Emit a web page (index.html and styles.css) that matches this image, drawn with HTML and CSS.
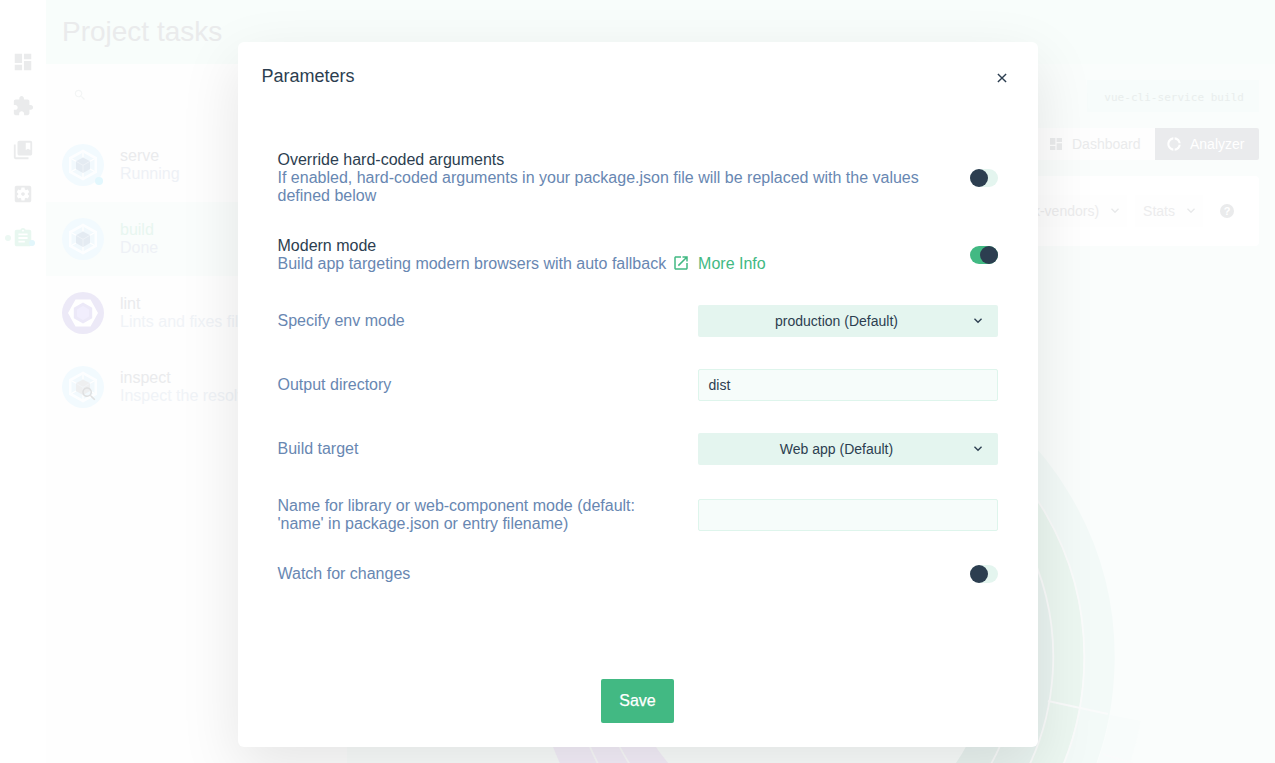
FILE: index.html
```html
<!DOCTYPE html>
<html lang="en">
<head>
<meta charset="utf-8">
<title>Project tasks</title>
<link rel="stylesheet" href="styles.css">
</head>
<body>
<svg class="defs" width="0" height="0">
  <symbol id="dashboard" viewBox="0 0 24 24"><path d="M3 13h8V3H3v10zm0 8h8v-6H3v6zm10 0h8V11h-8v10zm0-18v6h8V3h-8z"/></symbol>
  <symbol id="chevron" viewBox="0 0 24 24"><path d="M7.41 7.84L12 12.42l4.59-4.58L18 9.25l-6 6-6-6z"/></symbol>
  <symbol id="search" viewBox="0 0 24 24"><path d="M15.5 14h-.79l-.28-.27C15.41 12.59 16 11.11 16 9.5 16 5.91 13.09 3 9.5 3S3 5.91 3 9.5 5.91 16 9.5 16c1.61 0 3.09-.59 4.23-1.57l.27.28v.79l5 4.99L20.49 19l-4.99-5zm-6 0C7.01 14 5 11.99 5 9.5S7.01 5 9.5 5 14 7.01 14 9.5 11.99 14 9.5 14z"/></symbol>
  <symbol id="webpack" viewBox="0 0 42 42">
    <circle cx="21" cy="21" r="21" fill="#f2fafe"/>
    <path d="M21 5.500l14 7.800v15.400l-14 7.800-14-7.800V13.300z" fill="#fdfeff"/>
    <path d="M21 8.500l11.500 6.400v12.200L21 33.500l-11.500-6.400V14.900z" fill="#f2f9fd"/>
    <path d="M21 13.500v-5M14 17.300l-4.500-2.500M28 17.300l4.500-2.500M14 25l-4.500 2.500M28 25l4.500 2.500M21 29v5" stroke="#fff" stroke-width="1.300"/>
    <path class="cube" d="M21 13.500l7 3.800v7.700l-7 4-7-4v-7.700z"/>
    <path d="M14 17.300l7 4 7-4M21 21.300V29" fill="none" stroke="#f4f7fb" stroke-width=".7"/>
  </symbol>
</svg>
<div class="app">
  <nav class="sidebar">
    <svg class="nav-icon"><use href="#dashboard"/></svg>
    <svg class="nav-icon" viewBox="0 0 24 24"><path d="M20.500 11H19V7c0-1.100-.9-2-2-2h-4V3.500C13 2.120 11.880 1 10.500 1S8 2.120 8 3.500V5H4c-1.100 0-1.990.9-1.990 2v3.800H3.500c1.490 0 2.700 1.210 2.700 2.700s-1.210 2.700-2.700 2.700H2V20c0 1.100.9 2 2 2h3.800v-1.500c0-1.490 1.210-2.700 2.700-2.700s2.700 1.210 2.700 2.700V22H17c1.100 0 2-.9 2-2v-4h1.500c1.380 0 2.500-1.120 2.500-2.500S21.880 11 20.500 11z"/></svg>
    <svg class="nav-icon" viewBox="0 0 24 24"><path d="M4 6H2v14c0 1.100.9 2 2 2h14v-2H4V6z"/><path d="M20 2H8c-1.100 0-2 .9-2 2v12c0 1.100.9 2 2 2h12c1.100 0 2-.9 2-2V4c0-1.100-.9-2-2-2zm0 10l-2.500-1.500L15 12V4h5v8z"/></svg>
    <svg class="nav-icon" viewBox="0 0 24 24"><path d="M12 10c-1.100 0-2 .9-2 2s.9 2 2 2 2-.9 2-2-.9-2-2-2zm7-7H5c-1.110 0-2 .9-2 2v14c0 1.100.890 2 2 2h14c1.110 0 2-.9 2-2V5c0-1.100-.890-2-2-2zm-1.750 9c0 .230-.020.460-.050.680l1.480 1.160c.130.110.170.300.080.450l-1.400 2.420c-.090.150-.270.210-.430.150l-1.740-.7c-.360.280-.760.510-1.180.690l-.260 1.850c-.030.170-.180.300-.350.300h-2.800c-.170 0-.320-.130-.350-.290l-.260-1.850c-.430-.180-.820-.410-1.180-.690l-1.740.7c-.160.060-.340 0-.430-.150l-1.400-2.420c-.090-.150-.050-.340.080-.450l1.480-1.160c-.030-.230-.050-.460-.050-.690s.020-.460.050-.680l-1.480-1.160c-.130-.110-.170-.300-.080-.450l1.400-2.420c.090-.150.270-.210.430-.150l1.740.7c.360-.280.760-.510 1.180-.690l.260-1.850c.030-.170.180-.300.350-.300h2.800c.170 0 .320.130.350.290l.260 1.850c.430.180.820.410 1.180.690l1.740-.7c.160-.060.340 0 .430.150l1.400 2.420c.090.150.050.340-.080.450l-1.480 1.160c.030.230.050.460.050.690z"/></svg>
    <div class="nav-active">
      <svg class="nav-icon" viewBox="0 0 24 24"><path d="M19 3h-4.180C14.400 1.840 13.300 1 12 1s-2.400.84-2.820 2H5c-1.100 0-2 .9-2 2v14c0 1.100.9 2 2 2h14c1.100 0 2-.9 2-2V5c0-1.100-.9-2-2-2zm-7 0c.55 0 1 .45 1 1s-.45 1-1 1-1-.45-1-1 .45-1 1-1zm2 14H7v-2h7v2zm3-4H7v-2h10v2zm0-4H7V7h10v2z"/></svg>
    </div>
  </nav>
  <div class="page">
    <header class="top">Project tasks</header>
    <div class="body">
      <aside class="tasks">
        <svg class="search"><use href="#search"/></svg>
        <div class="task running"><svg class="logo"><use href="#webpack"/></svg><div><div class="name">serve</div><div class="status">Running</div></div></div>
        <div class="task selected"><svg class="logo"><use href="#webpack"/></svg><div><div class="name">build</div><div class="status">Done</div></div></div>
        <div class="task"><svg class="logo" viewBox="0 0 42 42"><circle cx="21" cy="21" r="21" fill="#ece9f7"/><path d="M13.500 7.500h15L36 21l-7.500 13.500h-15L6 21z" fill="#fff"/><path d="M21 10.500l9.200 5.200v10.600L21 31.500l-9.200-5.200V15.700z" fill="#ece9f8"/><path d="M21 14l6 3.500v7L21 28l-6-3.500v-7z" fill="#f1eefd"/></svg><div><div class="name">lint</div><div class="status faint">Lints and fixes files</div></div></div>
        <div class="task inspect"><svg class="logo"><use href="#webpack"/></svg><svg class="lens"><use href="#search"/></svg><div><div class="name">inspect</div><div class="status faint">Inspect the resolved</div></div></div>
      </aside>
      <main class="details">
        <div class="command">vue-cli-service build</div>
        <div class="tabs">
          <div class="tab"><svg class="icon"><use href="#dashboard"/></svg>Dashboard</div>
          <div class="tab current"><svg class="icon donut" viewBox="0 0 24 24"><path d="M11 5.080V2c-5 .5-9 4.810-9 10s4 9.500 9 10v-3.080c-3-.480-6-3.400-6-6.920s3-6.440 6-6.920zM18.970 11H22c-.470-5-4-8.530-9-9v3.080C16 5.510 18.540 8 18.970 11zM13 18.920V22c5-.470 8.530-4 9-9h-3.030c-.430 3-2.970 5.490-5.970 5.920z"/></svg>Analyzer</div>
        </div>
        <div class="toolbar">
          <div class="drop">Chunk (chunk-vendors)<svg class="chev"><use href="#chevron"/></svg></div>
          <div class="drop">Stats<svg class="chev"><use href="#chevron"/></svg></div>
          <div class="help">?</div>
        </div>
        <svg class="sunburst" viewBox="347 250 928 513">
          <g fill="none">
            <path stroke="#eaf4f1" stroke-width="65" d="M798 434.500A222.500 222.500 0 0 1 967 802"/>
            <path stroke="#ecf7f1" stroke-width="31" d="M798 386.500A270.500 270.500 0 0 1 1034 789"/>
            <path stroke="#f3faf8" stroke-width="31" d="M798 355.500A301.500 301.500 0 0 1 1062 802"/>
            <path stroke="#f8fcfb" stroke-width="31" d="M1125.500 718A333 333 0 0 1 1092 813"/>
            <path stroke="#f5effa" stroke-width="92" d="M594 725A213 213 0 0 0 654 814"/>
            <g stroke="#fafbfb" stroke-width="1.800">
              <path d="M798 371A286 286 0 0 1 1046 800M798 402A255 255 0 0 1 1008 802M798 436A221 221 0 0 1 966 800"/>
              <path d="M582 725A227 227 0 0 0 636 816M610 725A199 199 0 0 0 664 804"/>
              <path d="M1048 701L1108 714M1103 754l35 11"/>
            </g>
          </g>
        </svg>
      </main>
    </div>
  </div>
</div>
<section class="modal" role="dialog">
  <div class="modal-head"><h1>Parameters</h1><svg class="close" viewBox="0 0 10 10"><path d="M.9.9l8.200 8.200M9.100.9L.9 9.100"/></svg></div>
  <div class="form">
    <div class="row tall"><div class="text"><div class="title">Override hard-coded arguments</div>If enabled, hard-coded arguments in your package.json file will be replaced with the values defined below</div><div class="switch"></div></div>
    <div class="row modern"><div class="text"><div class="title">Modern mode</div>Build app targeting modern browsers with auto fallback <a class="more"><svg class="launch" viewBox="0 0 24 24"><path d="M19 19H5V5h7V3H5c-1.110 0-2 .9-2 2v14c0 1.100.890 2 2 2h14c1.100 0 2-.9 2-2v-7h-2v7zM14 3v2h3.590l-9.830 9.830 1.410 1.410L19 6.410V10h2V3h-7z"/></svg>More Info</a></div><div class="switch on"></div></div>
    <div class="row"><div class="text">Specify env mode</div><div class="select"><span>production (Default)</span><svg class="chev"><use href="#chevron"/></svg></div></div>
    <div class="row"><div class="text">Output directory</div><div class="input">dist</div></div>
    <div class="row"><div class="text">Build target</div><div class="select"><span>Web app (Default)</span><svg class="chev"><use href="#chevron"/></svg></div></div>
    <div class="row library"><div class="text">Name for library or web-component mode (default: 'name' in package.json or entry filename)</div><div class="input"></div></div>
    <div class="row watch"><div class="text">Watch for changes</div><div class="switch"></div></div>
  </div>
  <div class="actions"><button class="save">Save</button></div>
</section>
</body>
</html>
```
FILE: styles.css
```css
* { box-sizing: border-box; }
body { margin: 0; width: 1275px; height: 763px; overflow: hidden; position: relative; font: 16px/18px "Liberation Sans", Arial, sans-serif; background: #fff; }
.defs { position: absolute; }
.app { display: flex; height: 763px; }
.sidebar { width: 46px; padding-top: 51px; display: flex; flex-direction: column; align-items: center; gap: 22px; }
.nav-icon { width: 22px; height: 22px; flex: none; fill: #eaebec; display: block; }
.nav-active { position: relative; }
.nav-active .nav-icon { fill: #e8f7f0; }
.nav-active::before, .nav-active::after { content: ""; position: absolute; border-radius: 50%; width: 6px; height: 6px; }
.nav-active::before { left: -7px; top: 8px; background: #ecf8f3; }
.nav-active::after { left: 17px; top: 13px; background: #e2f6fb; }
.page { flex: 1; min-width: 0; display: flex; flex-direction: column; background: #fafdfc; }
.top { height: 64px; padding: 16px 16px; font-size: 28px; line-height: 32px; color: #eaebec; background: #f8fdfb; }
.body { flex: 1; display: flex; min-height: 0; }
.tasks { width: 301px; background: #fefefe; padding-top: 24px; }
.search { display: block; width: 14px; height: 14px; margin: 0 0 26px 27px; fill: #f3f5f5; }
.task { height: 74px; padding-left: 16px; display: flex; align-items: center; gap: 16px; position: relative; white-space: nowrap; overflow: hidden; }
.task.selected { background: #fafdfc; }
.logo { width: 42px; height: 42px; flex: none; fill: #e4ebf2; }
.name { color: #eaebed; }
.selected .name { color: #e8f6f0; }
.status { color: #eef1f6; }
.faint { color: #f0f3f7; }
.running::after { content: ""; position: absolute; left: 49px; top: 49px; width: 8px; height: 8px; border-radius: 50%; background: #e2f7fd; }
.inspect .logo { fill: #eeeff0; }
.lens { position: absolute; left: 34px; top: 35px; width: 18px; height: 18px; fill: #dfe0e1; }
.details { flex: 1; min-width: 0; padding: 16px 16px 0; display: flex; flex-direction: column; align-items: flex-end; }
.command { height: 32px; padding: 0 15px 0 17px; font: 11px/36px "DejaVu Sans Mono", monospace; color: #e9eeed; background: #f7fcfb; letter-spacing: .030px; }
.tabs { display: flex; margin-top: 16px; }
.tab { height: 32px; width: 118px; background: #fefefe; color: #eaebec; font-size: 14px; display: flex; align-items: center; padding-left: 11px; gap: 8px; }
.tab.current { width: 104px; background: #eaebed; color: #fff; border-radius: 0 2px 2px 0; }
.icon { width: 16px; height: 16px; fill: #eaebec; }
.icon.donut { fill: #fff; }
.toolbar { width: 896px; height: 70px; margin-top: 16px; border-radius: 4px; background: #fff; display: flex; align-items: center; justify-content: flex-end; gap: 8px; padding-right: 16px; flex: none; font-size: 14px; color: #ececed; }
.drop { height: 32px; display: flex; align-items: center; gap: 8px; padding: 0 4px 0 8px; background: #fefefe; }
.toolbar .chev { fill: #e8e9ea; }
.chev { width: 16px; height: 16px; fill: #2c3e50; flex: none; }
.help { width: 14px; height: 14px; margin: 0 9px; border-radius: 50%; background: #eaebec; color: #fff; font: bold 11px/14px "Liberation Sans", sans-serif; text-align: center; }
.sunburst { width: 928px; height: 513px; margin: 4px -16px 0 0; flex: none; }
.modal { position: absolute; left: 238px; top: 42px; width: 800px; height: 705px; border-radius: 6px; background: #fff; box-shadow: 0 20px 60px rgba(0, 0, 0, .1); display: flex; flex-direction: column; color: #2c3e50; }
.modal-head { display: flex; justify-content: space-between; align-items: center; padding: 23px 31px 0 23.500px; }
h1 { font-weight: 400; font-size: 18px; line-height: 22px; margin: 0; }
.close { width: 10px; height: 10px; margin-top: 3px; stroke: #2c3e50; stroke-width: 1.400; }
.form { margin: 64px 40px 0 39.500px; }
.row { display: flex; align-items: center; justify-content: space-between; height: 64px; color: #6887b2; }
.row.tall { height: 54px; margin: 0 0 32px; }
.row.modern { height: 36px; margin: 0 0 16px; }
.row.library { height: 68px; }
.row.watch { height: 49px; }
.text { max-width: 650px; }
.library .text { max-width: 370px; }
.title { color: #2c3e50; }
.more { color: #42b983; white-space: nowrap; }
.launch { width: 18px; height: 18px; fill: #42b983; vertical-align: 0; margin: -4px 8.500px -3px 1px; }
.switch { width: 28px; height: 18px; border-radius: 9px; background: #e4f5ef; display: flex; }
.switch::after { content: ""; width: 18px; height: 18px; border-radius: 50%; background: #2c3e50; }
.switch.on { background: #42b983; justify-content: flex-end; }
.select, .input { width: 300px; height: 32px; border-radius: 2px; font-size: 14px; display: flex; align-items: center; color: #2c3e50; }
.select { background: #e4f5ef; padding-right: 12px; }
.select span { flex: 1; text-align: center; padding-left: 5px; }
.input { border: 1px solid #def5ec; background: #f6fcfa; padding-left: 9.500px; }
.actions { margin-top: auto; padding-bottom: 24px; display: flex; justify-content: center; }
.save { width: 73px; height: 44px; margin-right: 1px; border: 0; border-radius: 2px; background: #42b983; color: #fff; font: 16px "Liberation Sans", Arial, sans-serif; -webkit-text-stroke: .250px #fff; }
```
